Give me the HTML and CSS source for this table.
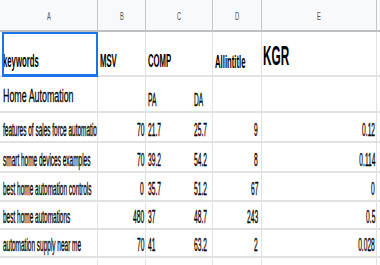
FILE: index.html
```html
<!DOCTYPE html>
<html>
<head>
<meta charset="utf-8">
<link rel="stylesheet" href="styles.css">
</head>
<body>
<div class="sheet">
  <div class="h"><span class="t">A</span></div>
  <div class="h"><span class="t">B</span></div>
  <div class="h"><span class="t">C</span></div>
  <div class="h"><span class="t">D</span></div>
  <div class="h"><span class="t">E</span></div>
  <div class="h end"></div>

  <div class="cell r1 ca sel"><span class="t">keywords</span></div>
  <div class="cell r1 cb"><span class="t">MSV</span></div>
  <div class="cell r1 cc"><span class="t">COMP</span></div>
  <div class="cell r1 cd ai"><span class="t">Allintitle</span></div>
  <div class="cell r1 ce kgr"><span class="t">KGR</span></div>
  <div class="cell end"></div>

  <div class="cell r2 ca home"><span class="t">Home Automation</span></div>
  <div class="cell r2 cb"></div>
  <div class="cell r2 cc sub"><span class="w"><span class="t">PA</span></span><span class="t">DA</span></div>
  <div class="cell r2 cd"></div>
  <div class="cell r2 ce"></div>
  <div class="cell end"></div>

  <div class="cell rd ca"><span class="t">features of sales force automation</span></div>
  <div class="cell rd cb num"><span class="t">70</span></div>
  <div class="cell rd cc"><span class="w"><span class="t">21.7</span></span><span class="t">25.7</span></div>
  <div class="cell rd cd num"><span class="t">9</span></div>
  <div class="cell rd ce num"><span class="t">0.12</span></div>
  <div class="cell end"></div>

  <div class="cell rd ca"><span class="t">smart home devices examples</span></div>
  <div class="cell rd cb num"><span class="t">70</span></div>
  <div class="cell rd cc"><span class="w"><span class="t">39.2</span></span><span class="t">54.2</span></div>
  <div class="cell rd cd num"><span class="t">8</span></div>
  <div class="cell rd ce num"><span class="t">0.114</span></div>
  <div class="cell end"></div>

  <div class="cell rd ca"><span class="t">best home automation controls</span></div>
  <div class="cell rd cb num"><span class="t">0</span></div>
  <div class="cell rd cc"><span class="w"><span class="t">35.7</span></span><span class="t">51.2</span></div>
  <div class="cell rd cd num"><span class="t">67</span></div>
  <div class="cell rd ce num"><span class="t">0</span></div>
  <div class="cell end"></div>

  <div class="cell rd ca"><span class="t">best home automations</span></div>
  <div class="cell rd cb num"><span class="t">480</span></div>
  <div class="cell rd cc"><span class="w"><span class="t">37</span></span><span class="t">48.7</span></div>
  <div class="cell rd cd num"><span class="t">243</span></div>
  <div class="cell rd ce num"><span class="t">0.5</span></div>
  <div class="cell end"></div>

  <div class="cell rd ca"><span class="t">automation supply near me</span></div>
  <div class="cell rd cb num"><span class="t">70</span></div>
  <div class="cell rd cc"><span class="w"><span class="t">41</span></span><span class="t">63.2</span></div>
  <div class="cell rd cd num"><span class="t">2</span></div>
  <div class="cell rd ce num"><span class="t">0.028</span></div>
  <div class="cell end"></div>

  <div class="cell rd ca"></div>
  <div class="cell rd cb"></div>
  <div class="cell rd cc"></div>
  <div class="cell rd cd"></div>
  <div class="cell rd ce"></div>
  <div class="cell end"></div>
</div>
</body>
</html>
```

FILE: styles.css
```css
html, body {
  margin: 0;
  padding: 0;
  background: #ffffff;
  overflow: hidden;
}

.sheet {
  display: grid;
  grid-template-columns: 98px 48px 67px 49px 115px 3px;
  grid-template-rows: 32px 45px 36px 30px 30px 29px 28px 28px 20px;
  width: 380px;
  height: 265px;
  font-family: "Liberation Sans", Arial, sans-serif;
  color: #000;
}

.t {
  display: inline-block;
  white-space: nowrap;
  line-height: 1;
  transform-origin: left bottom;
}

/* column header row */
.h {
  box-sizing: border-box;
  background: #f8f9fa;
  border-right: 1px solid #c7c7c7;
  border-bottom: 2px solid #c0c0c0;
  display: flex;
  align-items: center;
  justify-content: center;
  padding-top: 3px;
  font-size: 11.5px;
  line-height: 1;
  color: #4f5256;
}
.h .t {
  transform-origin: center center;
  transform: scaleX(0.5);
}
.h.end {
  border-right: none;
}

/* body cells */
.cell {
  box-sizing: border-box;
  border-right: 1px solid #e2e2e2;
  border-bottom: 2px solid #e2e2e2;
  display: flex;
  align-items: flex-end;
  overflow: hidden;
  padding: 0 2px 2px 2px;
  line-height: 1;
}
.cell.end {
  border-right: none;
}
.ca { padding-left: 3px; }
.ce { padding-left: 1px; }

/* header data row */
.r1 {
  font-size: 18px;
  font-weight: bold;
  padding-bottom: 5px;
}
.r1 .t { transform: scaleX(0.43); }
.r1.ai { padding-bottom: 4px; }
.r1.kgr { font-size: 28px; }
.r1.kgr .t { transform: scaleX(0.42); }

.sel {
  position: relative;
  overflow: visible;
}
.sel::after {
  content: "";
  position: absolute;
  left: 2px;
  top: 0;
  right: -1px;
  bottom: -2px;
  border: 2px solid #1a73e8;
  border-bottom-width: 3px;
}

/* group row */
.r2 {
  font-size: 17.5px;
  -webkit-text-stroke: 0.3px #000;
}
.r2 .t { transform: scaleX(0.38); }
.r2.home {
  font-size: 19px;
  padding-bottom: 6px;
}
.r2.home .t { transform: scaleX(0.467); }

/* data rows */
.rd {
  font-size: 17.5px;
  -webkit-text-stroke: 0.35px #000;
}
.rd .t { transform: scaleX(0.37); }
.rd.num .t { transform: scaleX(0.38); }
.rd.cc .t { transform: scaleX(0.38); }

.num {
  justify-content: flex-end;
  padding-right: 1px;
}
.num .t { transform-origin: right bottom; }
.cd.num { padding-right: 3px; }

.w {
  flex: none;
  width: 46px;
  display: flex;
  align-items: flex-end;
}
```
